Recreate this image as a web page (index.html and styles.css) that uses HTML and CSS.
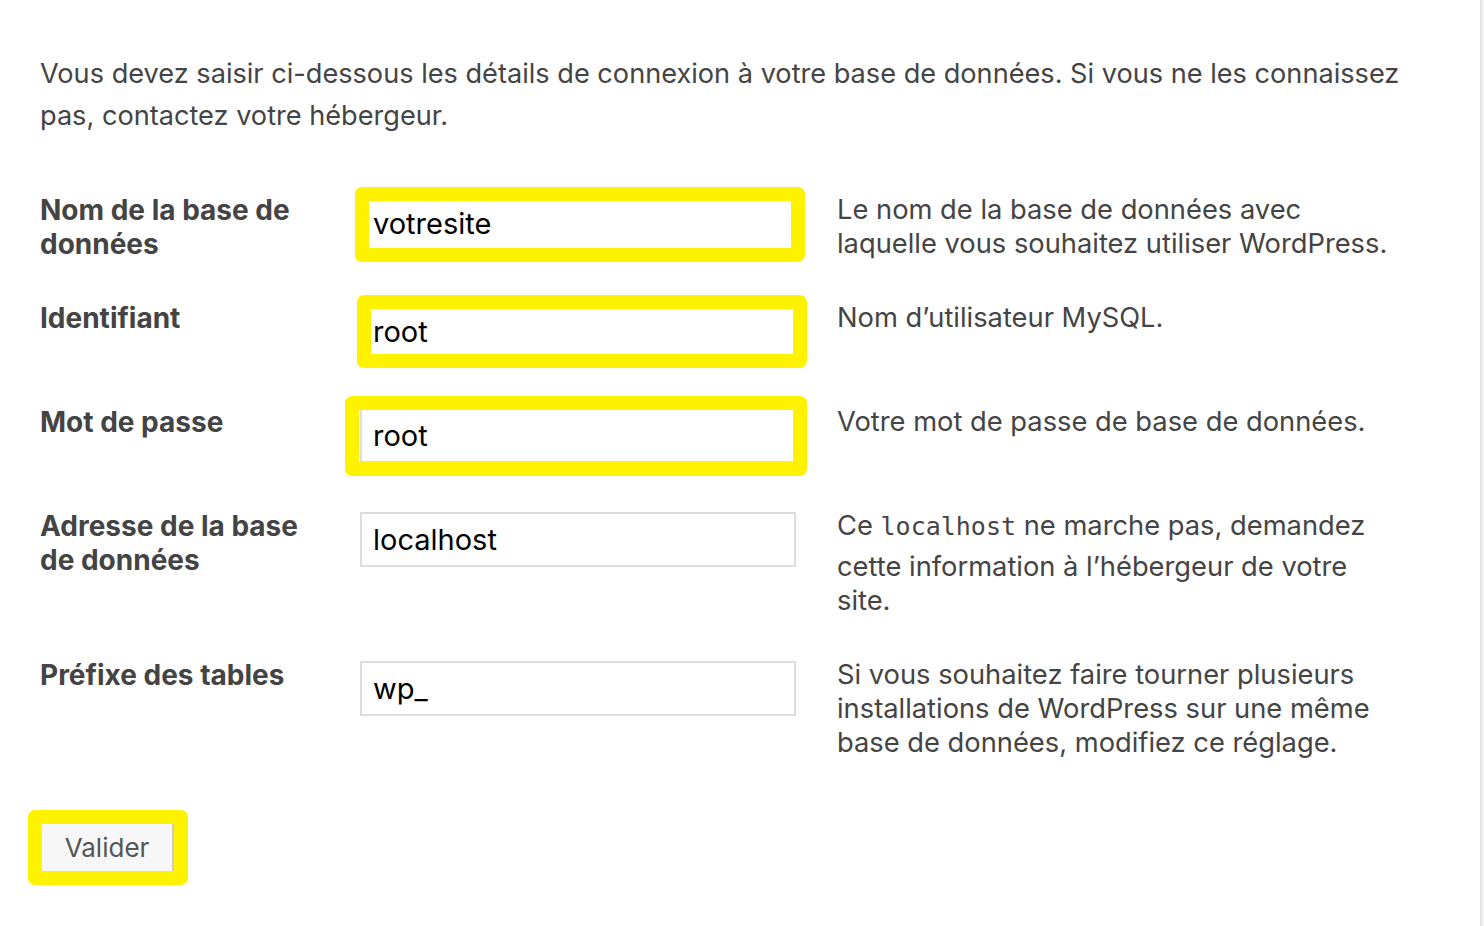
FILE: index.html
```html
<!DOCTYPE html>
<html lang="fr">
<head>
  <meta charset="UTF-8" />
  <title>Configuration de WordPress</title>
  <link rel="stylesheet" href="styles.css">
</head>
<body>
  <div class="card">
    <p class="intro">Vous devez saisir ci-dessous les détails de connexion à votre base de données. Si vous ne les connaissez pas, contactez votre hébergeur.</p>

    <!-- Database settings -->
    <div class="form-table">
      <div class="row">
        <label class="label" for="dbname">Nom de la base de données</label>
        <div class="field">
          <span class="mark mark-1"><input id="dbname" type="text" value="votresite"></span>
        </div>
        <div class="desc">Le nom de la base de données avec laquelle vous souhaitez utiliser WordPress.</div>
      </div>

      <div class="row">
        <label class="label" for="uname">Identifiant</label>
        <div class="field">
          <span class="mark mark-2"><input id="uname" type="text" value="root"></span>
        </div>
        <div class="desc">Nom d’utilisateur MySQL.</div>
      </div>

      <div class="row">
        <label class="label" for="pwd">Mot de passe</label>
        <div class="field">
          <span class="mark mark-3"><input id="pwd" type="text" value="root"></span>
        </div>
        <div class="desc">Votre mot de passe de base de données.</div>
      </div>

      <div class="row">
        <label class="label" for="dbhost">Adresse de la base de données</label>
        <div class="field">
          <input id="dbhost" type="text" value="localhost">
        </div>
        <div class="desc"><span>Ce <code>localhost</code> ne marche pas, demandez</span> <span>cette information à l’hébergeur de votre site.</span></div>
      </div>

      <div class="row">
        <label class="label" for="prefix">Préfixe des tables</label>
        <div class="field">
          <input id="prefix" type="text" value="wp_">
        </div>
        <div class="desc">Si vous souhaitez faire tourner plusieurs installations de WordPress sur une même base de données, modifiez ce réglage.</div>
      </div>
    </div>

    <div class="step">
      <span class="mark mark-btn"><button type="submit">Valider</button></span>
    </div>
  </div>
</body>
</html>
```

FILE: styles.css
```css
html, body {
  margin: 0;
  height: 100%;
}

body {
  background: #f1f1f1;
  font-family: Inter, "Noto Sans", sans-serif;
  color: #444;
}

.card {
  width: 1482px;
  min-height: 100%;
  box-sizing: border-box;
  padding: 53px 40px 0 40px;
  background: #fff;
  border-right: 2px solid #e5e5e5;
}

.intro {
  margin: 0;
  width: 1400px;
  font-size: 27.15px;
  line-height: 42px;
}

.form-table {
  margin-top: 36px;
}

.row {
  display: grid;
  grid-template-columns: 300px 477px 1fr;
  padding: 20px 0;
}

.label {
  padding-right: 20px;
  font-size: 28px;
  font-weight: 700;
  line-height: 34px;
}

.field {
  padding: 3px 0 6px 20px;
}

.field input {
  display: block;
  box-sizing: border-box;
  width: 436px;
  height: 55px;
  margin: 0;
  padding: 0 11px;
  border: 2px solid #ddd;
  font-family: inherit;
  font-size: 29px;
  color: #000;
  background: #fff;
  outline: none;
}

.desc {
  padding: 0 20px;
  font-size: 27.3px;
  line-height: 34px;
  max-width: 558px;
}

.desc code {
  display: inline-block;
  padding-bottom: 6px;
  font-family: "DejaVu Sans Mono", monospace;
  font-size: 25px;
  line-height: 34px;
}

.step {
  margin-top: 41px;
}

.step button {
  display: block;
  box-sizing: border-box;
  width: 134px;
  height: 52px;
  border: 2px solid #ccc;
  background: #f7f7f7;
  font-family: inherit;
  font-size: 26px;
  color: #555;
}

/* yellow marks drawn over the fields */
.mark {
  position: relative;
  display: inline-block;
  vertical-align: top;
}

.mark::after {
  content: "";
  position: absolute;
  border: 14px solid #fff200;
  border-radius: 7px;
  pointer-events: none;
}

.mark-1::after { left: -5px; right: -9px; top: -9px; bottom: -11px; }
.mark-2::after { left: -3px; right: -11px; top: -9px; bottom: -9px; }
.mark-3::after { left: -15px; right: -11px; top: -12px; bottom: -13px; }
.mark-btn::after { left: -12px; right: -14px; top: -11px; bottom: -12px; }
```
